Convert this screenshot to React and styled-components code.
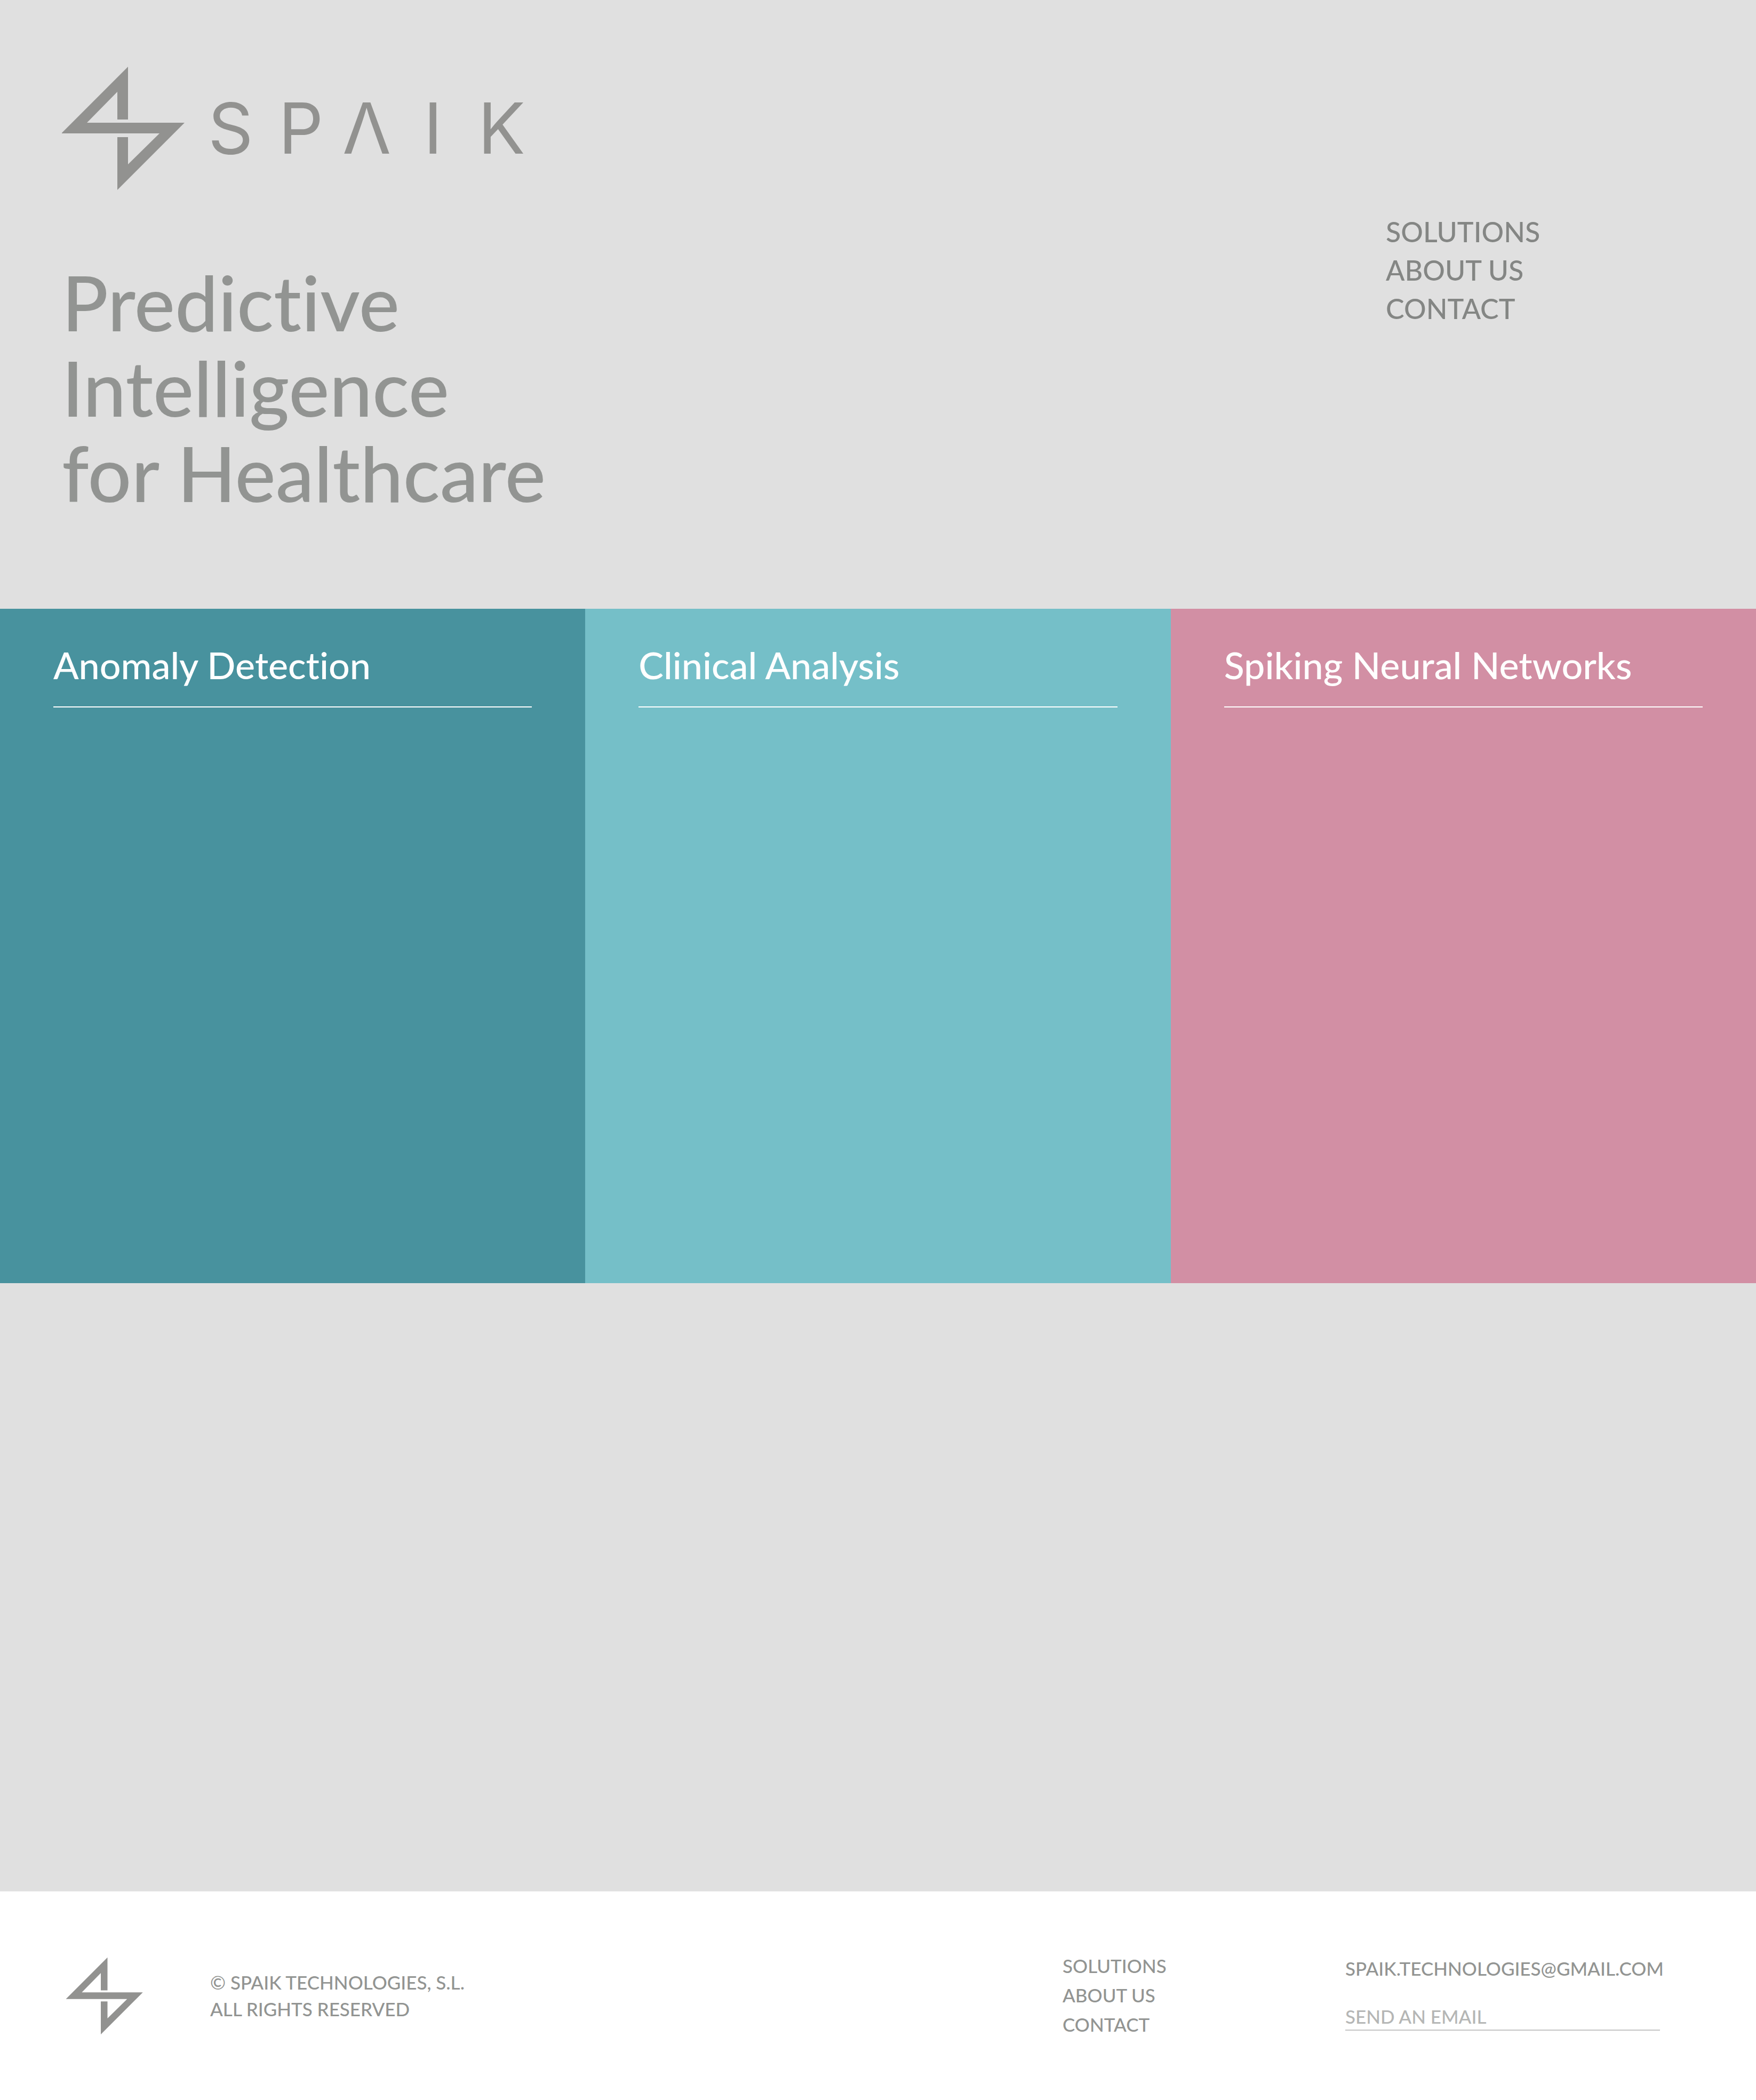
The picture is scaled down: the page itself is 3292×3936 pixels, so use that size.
import React from "react";
import styled, { createGlobalStyle } from "styled-components";

const GlobalStyle = createGlobalStyle`
  *, *::before, *::after { box-sizing: border-box; }
  body {
    margin: 0;
    background: #e0e0e0;
    color: #929492;
    font-family: Lato, "Liberation Sans", sans-serif;
    font-weight: 500;
    font-variant-ligatures: none;
  }
  h1, h2, p, ul { margin: 0; padding: 0; font-weight: inherit; }
  ul { list-style: none; }
`;

const Page = styled.div`
  display: flex;
  flex-direction: column;
  min-height: 100vh;
`;

const Header = styled.header`
  display: flex;
  justify-content: space-between;
  padding: 124px 398px 175px 116px;
`;

const Brand = styled.div`
  display: flex;
  flex-direction: column;
  gap: 130px;
`;

const Logo = styled.svg`
  display: block;
  flex: none;
  fill: #929290;
`;

const Wordmark = styled.text`
  font-family: Inter, "Liberation Sans", sans-serif;
  font-size: 132px;
  font-weight: 400;
`;

const Headline = styled.h1`
  font-size: 144px;
  line-height: 160px;
`;

const Nav = styled.nav`
  width: 296px;
  padding-top: ${(p) => (p.$large ? "274px" : "0")};
  color: ${(p) => (p.$large ? "#848684" : "#929492")};
  font-size: ${(p) => (p.$large ? "52px" : "35px")};
  line-height: ${(p) => (p.$large ? "72px" : "55px")};
`;

const TextLink = styled.a`
  color: inherit;
  text-decoration: none;
`;

const Cards = styled.section`
  display: grid;
  grid-template-columns: repeat(3, 1fr);
`;

const Card = styled.article`
  min-height: 1264px;
  padding: 61px 100px;
  background: ${(p) => p.$tone};
  color: #ffffff;
`;

const CardTitle = styled.h2`
  padding-bottom: 34px;
  border-bottom: 2px solid #ffffff;
  font-size: 70px;
  line-height: 88px;
`;

const Footer = styled.footer`
  display: flex;
  margin-top: auto;
  padding: 112px 180px 114px 124px;
  background: #ffffff;
  font-size: 35px;
`;

const FooterMark = styled.div`
  padding-top: 11px;
`;

const Legal = styled.p`
  flex: 1;
  padding: 33px 0 0 125px;
  line-height: 50px;
`;

const Contact = styled.form`
  display: flex;
  flex-direction: column;
  width: 590px;
  margin-left: 234px;
  padding-top: 5px;
  line-height: 55px;
`;

const EmailInput = styled.input`
  width: 100%;
  height: 52px;
  margin-top: 37px;
  padding: 0;
  border: 0;
  border-bottom: 2px solid #c4c4c4;
  border-radius: 0;
  outline: none;
  background: transparent;
  color: #929492;
  font: inherit;
  line-height: 50px;
  &::placeholder { color: #b5b6b5; opacity: 1; }
`;

const links = [
  ["SOLUTIONS", "#solutions"],
  ["ABOUT US", "#about"],
  ["CONTACT", "#contact"],
];

const cards = [
  ["Anomaly Detection", "#48929e"],
  ["Clinical Analysis", "#75bfc8"],
  ["Spiking Neural Networks", "#d28fa4"],
];

function Bolt() {
  return <path d="M124 1V100H104V48L47 106H230L104 232V133H124V184L183 126H-1Z" />;
}

function Menu({ large, label }) {
  return (
    <Nav $large={large} aria-label={label}>
      <ul>
        {links.map(([text, href]) => (
          <li key={text}>
            <TextLink href={href}>{text}</TextLink>
          </li>
        ))}
      </ul>
    </Nav>
  );
}

export default function App() {
  return (
    <Page>
      <GlobalStyle />
      <Header>
        <Brand>
          <Logo width="880" height="232" viewBox="0 0 880 232" role="img" aria-label="SPAIK">
            <Bolt />
            <Wordmark x="274 406 526 678 780" y="164">SPΛIK</Wordmark>
          </Logo>
          <Headline>
            Predictive
            <br />
            Intelligence
            <br />
            for Healthcare
          </Headline>
        </Brand>
        <Menu large label="Main" />
      </Header>
      <Cards id="solutions">
        {cards.map(([title, tone]) => (
          <Card key={title} $tone={tone}>
            <CardTitle>{title}</CardTitle>
          </Card>
        ))}
      </Cards>
      <Footer id="contact">
        <FooterMark>
          <Logo width="145" height="145" viewBox="0 0 232 232" aria-hidden="true">
            <Bolt />
          </Logo>
        </FooterMark>
        <Legal>
          © SPAIK TECHNOLOGIES, S.L.
          <br />
          ALL RIGHTS RESERVED
        </Legal>
        <Menu label="Footer" />
        <Contact>
          <TextLink href="mailto:spaik.technologies@gmail.com">SPAIK.TECHNOLOGIES@GMAIL.COM</TextLink>
          <EmailInput type="text" aria-label="Send an email" placeholder="SEND AN EMAIL" />
        </Contact>
      </Footer>
    </Page>
  );
}
